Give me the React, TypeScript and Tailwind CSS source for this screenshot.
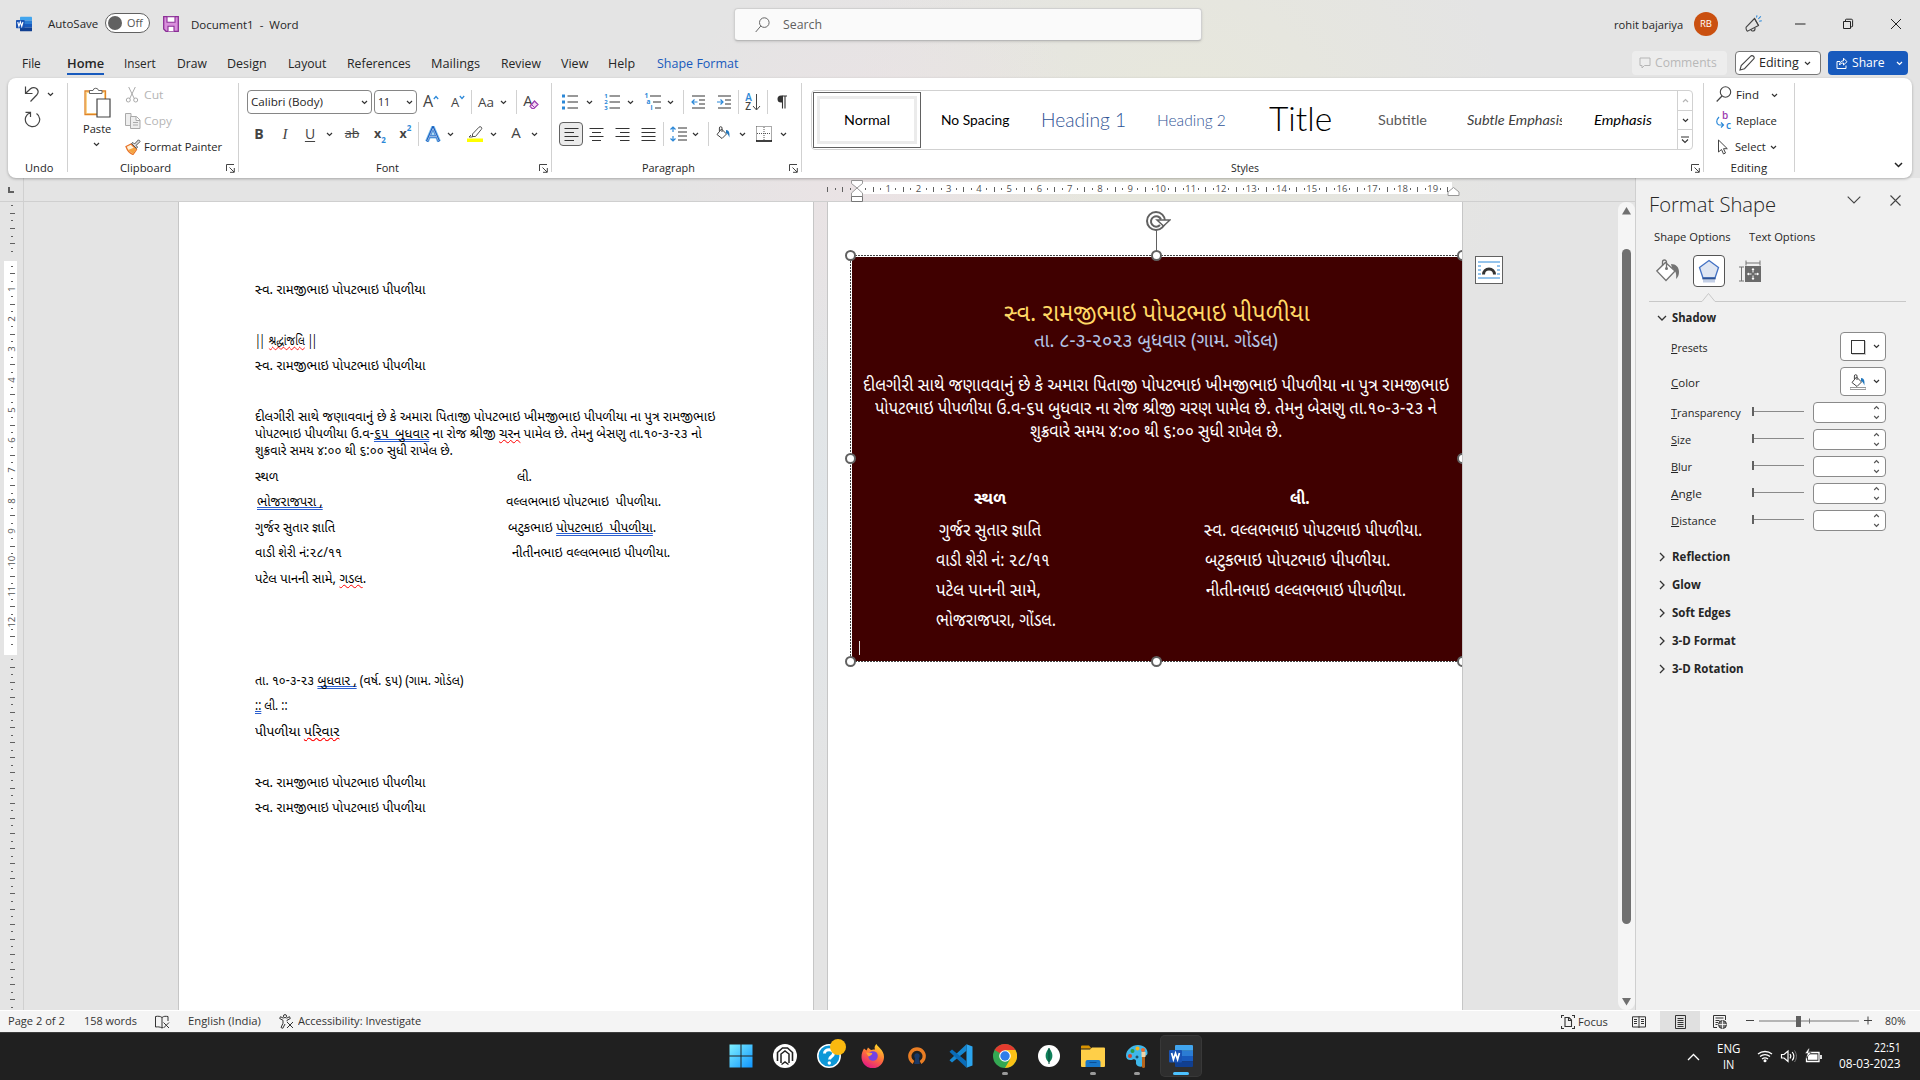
import { ReactNode, useLayoutEffect, useRef, useState } from "react";

/** Scales its text horizontally so that it takes exactly `w` pixels. */
function Fit({ w, className = "", children }: { w: number; className?: string; children: ReactNode }) {
  const ref = useRef<HTMLSpanElement>(null);
  const [scale, setScale] = useState(1);
  useLayoutEffect(() => {
    const natural = ref.current?.offsetWidth ?? w;
    if (natural > 0) setScale(w / natural);
  }, [w]);
  return (
    <span className={`inline-block shrink-0 whitespace-pre ${className}`} style={{ width: w }}>
      <span ref={ref} className="inline-block origin-left whitespace-pre" style={{ transform: `scaleX(${scale})` }}>
        {children}
      </span>
    </span>
  );
}

function Svg({ w, h, vb, className = "", children }: { w: number; h: number; vb?: string; className?: string; children: ReactNode }) {
  return (
    <svg width={w} height={h} viewBox={vb ?? `0 0 ${w} ${h}`} fill="none" className={`block shrink-0 ${className}`}>
      {children}
    </svg>
  );
}

const Chev = ({ c = "#333", className = "" }: { c?: string; className?: string }) => (
  <Svg w={7} h={5} className={className}>
    <path d="M1 1 3.5 3.5 6 1" stroke={c} strokeWidth="1.2" />
  </Svg>
);

const Cell = ({ className, children }: { className: string; children: ReactNode }) => (
  <div className={`flex shrink-0 items-center justify-center ${className}`}>{children}</div>
);

const Sep = ({ className = "" }: { className?: string }) => <div className={`h-6 w-px shrink-0 bg-[#d1d1d1] ${className}`} />;
const GroupSep = () => <div className="mt-[5px] h-[89px] w-px shrink-0 bg-[#d1d1d1]" />;

function WordLogo({ size }: { size: number }) {
  return (
    <Svg w={size} h={size} vb="0 0 24 24">
      <path d="M7 1h16a1 1 0 0 1 1 1v4.7H6V2a1 1 0 0 1 1-1z" fill="#41a5ee" />
      <path d="M6 6.700h18V12H6z" fill="#2b7cd3" />
      <path d="M6 12h18v5.300H6z" fill="#185abd" />
      <path d="M6 17.300h18V22a1 1 0 0 1-1 1H7a1 1 0 0 1-1-1z" fill="#103f91" />
      <rect x="0" y="6" width="13" height="12.400" rx="1" fill="#1a53b3" />
      <path d="M2.600 9 4.400 15.400 6.500 9.200 8.600 15.400 10.400 9" stroke="#fff" strokeWidth="1.700" />
    </Svg>
  );
}

function Launcher() {
  return (
    <Svg w={9} h={9}>
      <path d="M.5 7V.5H8M3.500 3.500l4.500 4.500M8.300 4v4.300H4" stroke="#444" />
    </Svg>
  );
}

function Group({ className, label, lw, launcher, children }: { className: string; label: string; lw: number; launcher?: boolean; children: ReactNode }) {
  return (
    <div className={`flex shrink-0 flex-col ${className}`}>
      <div className="h-[80px]">{children}</div>
      <div className="flex h-[20px] items-center">
        <div className="flex flex-1 justify-center">
          <Fit w={lw}>{label}</Fit>
        </div>
        {launcher && <Cell className="w-4"><Launcher /></Cell>}
      </div>
    </div>
  );
}

function TitleBar() {
  return (
    <div className="flex h-12 shrink-0 text-[11.5px]">
      <div className="mt-4 ml-4"><WordLogo size={16} /></div>
      <Fit w={50} className="mt-[15px] ml-4">AutoSave</Fit>
      <div className="mt-[13px] ml-[7px] flex h-5 w-[45px] items-center rounded-full border border-[#616161] bg-white pl-[2px]">
        <div className="size-[14px] rounded-full bg-[#616161]" />
        <Fit w={16} className="ml-[5px] leading-4 text-[#555]">Off</Fit>
      </div>
      <Svg w={16} h={16} className="mt-4 ml-[13px]">
        <path d="M.7.7h14.6v14.6H3L.7 13z" fill="#d98fdc" stroke="#8b2f96" strokeWidth="1.3" />
        <path d="M4 .7h8v5.6H4z" fill="#fff" stroke="#8b2f96" strokeWidth="1.1" />
        <path d="M5 15.3v-5h6v5" fill="#fff" stroke="#8b2f96" strokeWidth="1.1" />
      </Svg>
      <Fit w={108} className="mt-4 ml-3">{"Document1  -  Word"}</Fit>
      <div className="mt-2 ml-[435px] flex h-[33px] w-[468px] items-center rounded-[4px] border border-[#d0d0d0] border-b-[#b8b8b8] bg-[#fafafa] pl-[20px] shadow-sm">
        <Svg w={15} h={16}>
          <circle cx="9.3" cy="5.6" r="4.8" stroke="#666" />
          <path d="M5.8 9 .7 15" stroke="#666" />
        </Svg>
        <Fit w={39} className="ml-[13px] text-[12px] text-[#5f5f5f]">Search</Fit>
      </div>
      <Fit w={69} className="mt-4 ml-[412px]">rohit bajariya</Fit>
      <div className="mt-3 ml-[11px] flex size-6 items-center justify-center rounded-full bg-[#ca5010] text-[9.5px] text-white">
        <Fit w={12}>RB</Fit>
      </div>
      <Svg w={17} h={18} className="mt-[15px] ml-[27px]">
        <path d="M9.500 3.500 1.200 12.200c-.6.8.3 3.500 1.300 4l11-5.700z" stroke="#444" strokeWidth="1.100" />
        <path d="M9.500 3.500 13.500 10.500M6 14.500c.3 2.500 4.500 2 4-1.500" stroke="#444" strokeWidth="1.100" />
        <path d="M11.500 2.500 12 .3M13.300 4 15.800 1.300M14.200 6.300l2.600-.6" stroke="#2b88d8" strokeWidth="1.100" />
      </Svg>
      <Svg w={110} h={12} className="mt-[18px] ml-[33px]">
        <path d="M0 6h10.500" stroke="#222" />
        <path d="M48.500 3.500h7v7h-7z" stroke="#222" />
        <path d="M50.500 3.500V2a.8.8 0 0 1 .8-.8h5a1.300 1.300 0 0 1 1.300 1.300v5.500a.8.8 0 0 1-.8.8h-1.300" stroke="#222" />
        <path d="M96 1l10 10M106 1 96 11" stroke="#222" />
      </Svg>
    </div>
  );
}

function TabBar() {
  return (
    <div className="flex h-[30px] shrink-0 text-[12.5px] leading-[18px] text-[#262626]">
      <Fit w={19} className="mt-[7px] ml-[22px]">File</Fit>
      <div className="ml-[26px] flex flex-col pt-[7px]">
        <Fit w={37} className="font-semibold">Home</Fit>
        <div className="h-[2px] w-[37px] bg-[#185abd]" />
      </div>
      <Fit w={32} className="mt-[7px] ml-5">Insert</Fit>
      <Fit w={30} className="mt-[7px] ml-[21px]">Draw</Fit>
      <Fit w={40} className="mt-[7px] ml-5">Design</Fit>
      <Fit w={38} className="mt-[7px] ml-[21px]">Layout</Fit>
      <Fit w={64} className="mt-[7px] ml-[21px]">References</Fit>
      <Fit w={49} className="mt-[7px] ml-5">Mailings</Fit>
      <Fit w={40} className="mt-[7px] ml-[21px]">Review</Fit>
      <Fit w={27} className="mt-[7px] ml-5">View</Fit>
      <Fit w={27} className="mt-[7px] ml-5">Help</Fit>
      <Fit w={81} className="mt-[7px] ml-[22px] text-[#185abd]">Shape Format</Fit>
      <div className="mt-[3px] ml-[894px] flex h-6 w-[95px] items-center rounded-[4px] bg-[#ededed] pl-[7px] text-[#b8b8b8]">
        <Svg w={12} h={12}><path d="M1 1h10v7.500H5.500L3 11V8.500H1z" stroke="#b5b5b5" /></Svg>
        <Fit w={62} className="ml-1">Comments</Fit>
      </div>
      <div className="mt-[3px] ml-2 flex h-6 w-[86px] items-center rounded-[4px] border border-[#777] bg-white pl-[3px]">
        <Svg w={16} h={16}>
          <path d="M1 15 2.200 10.500 11.500 1.300a1.800 1.800 0 0 1 3 2.900L5.500 13.700z" stroke="#444" strokeWidth="1.100" />
        </Svg>
        <Fit w={40} className="ml-[4px]">Editing</Fit>
        <Chev className="ml-[5px]" />
      </div>
      <div className="mt-[3px] ml-[7px] flex h-6 w-[80px] items-center rounded-[4px] bg-[#185abd] pl-2 text-white">
        <Svg w={12} h={12}>
          <path d="M4 4.500H1v7h9V8.500M3.500 8C3.500 5 5.500 3.800 7.500 3.800V1.200L11 4.700 7.500 8V6C5.500 6 4.500 6.500 3.500 8z" stroke="#fff" />
        </Svg>
        <Fit w={33} className="ml-[4px]">Share</Fit>
        <Chev c="#fff" className="ml-[11px]" />
      </div>
    </div>
  );
}

const Lines = ({ xs }: { xs: [number, number][] }) => (
  <Svg w={15} h={14}>
    {xs.map(([a, b], i) => (
      <path key={i} d={`M${a} ${1.5 + i * 4}H${b}`} stroke="#333" />
    ))}
  </Svg>
);

function Bucket({ bar }: { bar?: boolean }) {
  return (
    <Svg w={16} h={16}>
      <path d="M6.500 3 11.500 8 7 12.500 2 8.500z" stroke="#444" />
      <path d="M7 6V2a1.300 1.300 0 0 0-2.600 0v3" stroke="#444" />
      <path d="M11 4c3 0 4 3 3.300 7.500C13.500 9 12.500 7.500 11 7z" fill="#2177bd" />
      {bar && <path d="M0 13.500h16v2H0z" stroke="#999" fill="#fff" />}
    </Svg>
  );
}

function UndoGroup() {
  return (
    <Group className="w-[59px] pl-[3px]" label="Undo" lw={28}>
      <div className="flex flex-col pt-[3px] pl-[13px]">
        <div className="flex h-[26px] items-center">
          <Svg w={16} h={18}>
            <path d="M1.500 1.500v7H8.500M1.700 8.200 6.500 3.700c2-1.700 5-1.500 6.500.3s1.500 4-.3 6L6.500 16.500" stroke="#444" strokeWidth="1.200" />
          </Svg>
          <Chev className="ml-[7px]" />
        </div>
        <Svg w={17} h={17} className="mt-[4px]">
          <path d="M1.500 1.300H6.500V6M6.200 1.700A7.200 7.200 0 1 0 12.500 2.500" stroke="#444" strokeWidth="1.200" />
        </Svg>
      </div>
    </Group>
  );
}

function ClipboardGroup() {
  return (
    <Group className="w-[170px]" label="Clipboard" lw={51} launcher>
      <div className="flex">
        <div className="flex w-[57px] flex-col items-center pt-[9px]">
          <Svg w={28} h={31}>
            <path d="M2 4h21v23H2z" fill="#fff" />
            <path d="M3.200 5.200h18.600v21.600H3.200z" stroke="#fbd78f" strokeWidth="1.600" />
            <path d="M8 4H2v23.500h12M17 4h5.500v8" stroke="#e08426" strokeWidth="1.300" />
            <path d="M6.500 6.500v-3h3.500a2.800 2.800 0 0 1 5.500 0H19v3z" fill="#fff" stroke="#666" />
            <path d="M14 12h13v18H14z" fill="#fff" stroke="#444" strokeWidth="1.200" />
          </Svg>
          <Fit w={28} className="mt-[2px] leading-[17px]">Paste</Fit>
          <Chev className="mt-[5px]" />
        </div>
        <div className="flex flex-col pt-[4px] text-[#b5b5b5]">
          <div className="flex h-[26px] items-center">
            <Svg w={14} h={16}>
              <path d="M3.700 0 9.500 12M10.300 0 4.500 12" stroke="#aaa" />
              <circle cx="3.300" cy="13" r="2" stroke="#aaa" />
              <circle cx="10.700" cy="13" r="2" stroke="#aaa" />
            </Svg>
            <Fit w={19} className="ml-[5px]">Cut</Fit>
          </div>
          <div className="flex h-[26px] items-center">
            <Svg w={16} h={16}>
              <path d="M5 12.500H.5v-12H6v3" stroke="#aaa" fill="#eee" />
              <path d="M5.500 3.500h6l3.500 3.500v8.500H5.500zM11 3.500V7.500h4M8 9.500h5M8 12h5" stroke="#aaa" fill="#eee" />
            </Svg>
            <Fit w={28} className="ml-[3px]">Copy</Fit>
          </div>
          <div className="flex h-[26px] items-center text-[#262626]">
            <Svg w={16} h={16}>
              <path d="M1 7.500 6 5l5.500 5.500L8 15.500C5 14.500 2.500 12 1 7.500z" fill="#fff2d8" stroke="#e8732a" strokeWidth="1.300" />
              <path d="M3 11l6.500-2.500 1.500 2L8 15z" fill="#f4a340" />
              <path d="M6.500 4.500 8 3.500 9.500 5 13.500.8l1.700 1.700L11 6.500l1.500 1.500L11.500 9.500z" fill="#ddd" stroke="#555" />
            </Svg>
            <Fit w={78} className="ml-[3px]">Format Painter</Fit>
          </div>
        </div>
      </div>
    </Group>
  );
}

function FontGroup() {
  return (
    <Group className="w-[312px]" label="Font" lw={23} launcher>
      <div className="flex flex-col pt-2 pl-2 text-[#444]">
        <div className="flex h-8 items-center">
          <div className="flex h-6 w-[125px] items-center justify-between rounded-[4px] border border-[#868686] pr-[3px] pl-[3px] text-[#262626]">
            <Fit w={72}>Calibri (Body)</Fit><Chev />
          </div>
          <div className="ml-[2px] flex h-6 w-[43px] items-center justify-between rounded-[4px] border border-[#868686] pr-[3px] pl-[3px] text-[#262626]">
            <Fit w={12}>11</Fit><Chev />
          </div>
          <Cell className="w-7 pb-[2px]">
            <span className="text-[16px] leading-5">A</span>
            <Svg w={6} h={5} className="mb-2"><path d="M.8 4 3 1.500 5.200 4" stroke="#2b88d8" strokeWidth="1.200" /></Svg>
          </Cell>
          <Cell className="w-[26px]">
            <span className="text-[13px] leading-5">A</span>
            <Svg w={6} h={5} className="mb-[10px]"><path d="M.8 1 3 3.500 5.200 1" stroke="#2b88d8" strokeWidth="1.200" /></Svg>
          </Cell>
          <Sep />
          <Cell className="w-7 text-[13.5px]">Aa</Cell>
          <Cell className="w-[7px]"><Chev /></Cell>
          <Sep className="ml-[9px]" />
          <Cell className="w-7">
            <span className="pb-1 text-[15px] leading-5">A</span>
            <Svg w={10} h={10} className="mt-[5px] -ml-[4px]">
              <path d="M5.500 1 9 4.500 5 8.500H3L1 6.300z" fill="#f3dcf5" stroke="#9c3bb0" strokeWidth="1.200" />
              <path d="M2.500 4.500 6 8" stroke="#9c3bb0" />
            </Svg>
          </Cell>
        </div>
        <div className="flex h-8 items-center text-[14px]">
          <Cell className="w-[24px] font-bold">B</Cell>
          <Cell className="ml-[2px] w-6 font-['Liberation_Serif'] text-[15px] italic">I</Cell>
          <Cell className="w-[26px] underline underline-offset-2">U</Cell>
          <Cell className="ml-[2px] w-2"><Chev /></Cell>
          <Cell className="w-[38px] text-[12.5px] line-through">ab</Cell>
          <Cell className="w-[18px]"><span className="text-[12.500px] font-bold">x</span><span className="mt-3 text-[8px] font-bold text-[#2b88d8]">2</span></Cell>
          <Cell className="ml-1 w-[25px]"><span className="text-[12.500px] font-bold">x</span><span className="mb-3 text-[8px] font-bold text-[#2b88d8]">2</span></Cell>
          <Sep />
          <Cell className="w-7">
            <Svg w={16} h={17}>
              <path d="M2 15.500 8 1.500l6 14M4.500 10.500h7" stroke="#7cc0ee" strokeWidth="4" />
              <path d="M2 15.500 8 1.500l6 14M4.500 10.500h7" stroke="#185abd" strokeWidth="2.200" />
              <path d="M2.500 15 8 2.500l5.500 12.500M5 10.500h6" stroke="#e8f4fc" strokeWidth=".6" />
            </Svg>
          </Cell>
          <Cell className="w-[7px]"><Chev /></Cell>
          <Cell className="ml-[7px] w-7">
            <Svg w={16} h={17}>
              <path d="M5.500 8 12 1.200a1.500 1.500 0 0 1 2.300 2.200L8.500 10.500H5.500zM5.500 8v3H2l2-2" stroke="#555" />
              <path d="M0 12.500h16V16H0z" fill="#ff0" />
            </Svg>
          </Cell>
          <Cell className="w-2"><Chev /></Cell>
          <Cell className="ml-[5px] w-7 pb-1 text-[15px]">A</Cell>
          <Cell className="w-2"><Chev /></Cell>
        </div>
      </div>
    </Group>
  );
}

function ParagraphGroup() {
  const full: [number, number] = [0.5, 14.5];
  return (
    <Group className="w-[249px]" label="Paragraph" lw={53} launcher>
      <div className="flex flex-col pt-2 pl-[5px]">
        <div className="flex h-8 items-center">
          <Cell className="w-[25px]">
            <Svg w={16} h={16}>
              <path d="M0 .5h3v3H0zM0 6.500h3v3H0zM0 12.500h3v3H0z" fill="#2b88d8" />
              <path d="M5.500 2H16M5.500 8H16M5.500 14H16" stroke="#333" strokeWidth="1.100" />
            </Svg>
          </Cell>
          <Cell className="ml-[2px] w-[10px]"><Chev /></Cell>
          <Cell className="ml-1 w-7">
            <div className="flex flex-col text-[6px] leading-[6px] font-bold text-[#2b88d8]"><span>1</span><span>2</span><span>3</span></div>
            <Svg w={12} h={16}><path d="M1.500 2H12M1.500 8H12M1.500 14H12" stroke="#333" strokeWidth="1.100" /></Svg>
          </Cell>
          <Cell className="w-2"><Chev /></Cell>
          <Cell className="ml-[5px] w-7">
            <div className="flex flex-col text-[6.500px] leading-[6px] font-bold text-[#2b88d8]"><span>1</span><span className="pl-[2px]">a</span><span className="pl-[6px]">i</span></div>
            <Svg w={11} h={16} className="-ml-[2px]"><path d="M0 2h11M3 8h8M5 14h6" stroke="#333" strokeWidth="1.100" /></Svg>
          </Cell>
          <Cell className="w-[6px]"><Chev /></Cell>
          <Sep className="ml-[10px]" />
          <Cell className="w-7">
            <Svg w={15} h={14}><path d="M1 1h13M8 5h6M8 9h6M1 13h13" stroke="#333" /><path d="M6.500 7H1M3.500 4.500 1 7l2.500 2.500" stroke="#2b88d8" strokeWidth="1.200" /></Svg>
          </Cell>
          <Cell className="w-6">
            <Svg w={15} h={14}><path d="M1 1h13M8 5h6M8 9h6M1 13h13" stroke="#333" /><path d="M0 7h6M3.500 4.500 6 7 3.500 9.500" stroke="#2b88d8" strokeWidth="1.200" /></Svg>
          </Cell>
          <Sep className="ml-[2px]" />
          <Cell className="w-7">
            <div className="flex flex-col text-[10px] leading-[9px] font-semibold"><span className="text-[#2b88d8]">A</span><span className="text-[#444]">Z</span></div>
            <Svg w={9} h={17}><path d="M4.500 0v15.500M1 12l3.500 4L8 12" stroke="#444" /></Svg>
          </Cell>
          <Sep />
          <Cell className="w-7">
            <Svg w={10} h={14}><path d="M5 1h5M5.500 1v12.500M8 1v12.500" stroke="#333" strokeWidth="1.100" /><path d="M5.500.5H4a3.500 3.500 0 0 0 0 7h1.500z" fill="#333" /></Svg>
          </Cell>
        </div>
        <div className="flex h-8 items-center">
          <Cell className="ml-[2px] h-6 w-6 rounded-[4px] border border-[#616161] bg-[#ebebeb]"><Lines xs={[full, [0.5, 10], full, [0.5, 10]]} /></Cell>
          <Cell className="w-[26px]"><Lines xs={[full, [3, 12], full, [3, 12]]} /></Cell>
          <Cell className="w-[26px]"><Lines xs={[full, [5, 14.5], full, [5, 14.5]]} /></Cell>
          <Cell className="w-[26px]"><Lines xs={[full, full, full, full]} /></Cell>
          <Sep className="ml-[2px]" />
          <Cell className="w-7">
            <Svg w={17} h={16}><path d="M3 6V1M.5 3.500 3 1l2.500 2.500M3 10v5M.5 12.500 3 15l2.500-2.500" stroke="#2b88d8" strokeWidth="1.200" /><path d="M8 2h9M8 6h9M8 10h9M8 14h9" stroke="#333" /></Svg>
          </Cell>
          <Cell className="w-[7px]"><Chev /></Cell>
          <Sep className="ml-[9px]" />
          <Cell className="w-[28px]"><Bucket /></Cell>
          <Cell className="ml-[2px] w-[7px]"><Chev /></Cell>
          <Cell className="ml-1 w-7">
            <Svg w={16} h={16}>
              <path d="M.5.5h15v14M.5.5V15M8 1v13M1 7.500h14" stroke="#555" strokeDasharray="1 1" />
              <path d="M0 15h16" stroke="#000" strokeWidth="1.500" />
            </Svg>
          </Cell>
          <Cell className="w-[10px]"><Chev /></Cell>
        </div>
      </div>
    </Group>
  );
}

function StylesGroup() {
  return (
    <Group className="w-[901px]" label="Styles" lw={28} launcher>
      <div className="mt-3 ml-[9px] flex h-[60px] w-[882px] rounded-[4px] border border-[#d1d1d1] font-['Lato'] text-black">
        <div className="mt-px ml-px flex h-[56px] w-[108px] items-center justify-center border border-[#616161] p-[3px]">
          <div className="flex size-full items-center justify-center border-[3px] border-[#ebebeb] text-[13px]">
            <Fit w={46}>Normal</Fit>
          </div>
        </div>
        <Cell className="w-[108px] text-[13px]"><Fit w={68}>No Spacing</Fit></Cell>
        <Cell className="w-[108px] text-[19px] font-light text-[#2f5496]"><Fit w={85}>Heading 1</Fit></Cell>
        <Cell className="w-[108px] text-[16px] font-light text-[#2f5496]"><Fit w={69}>Heading 2</Fit></Cell>
        <Cell className="w-[110px] pb-1 text-[33px] font-light"><Fit w={63}>Title</Fit></Cell>
        <Cell className="w-[94px] text-[13px] text-[#5a5a5a]"><Fit w={49}>Subtitle</Fit></Cell>
        <div className="flex w-[121px] items-center pl-[18px] text-[13px] text-[#404040] italic">
          <div className="w-[95px] overflow-hidden"><Fit w={98}>Subtle Emphasis</Fit></div>
        </div>
        <Cell className="w-[106px] text-[13px] italic"><Fit w={58}>Emphasis</Fit></Cell>
        <div className="ml-auto flex w-[15px] flex-col border-l border-[#d1d1d1]">
          <Cell className="h-[19px]"><Svg w={7} h={5}><path d="M1 4 3.500 1.500 6 4" stroke="#b5b5b5" strokeWidth="1.200" /></Svg></Cell>
          <Cell className="h-[20px] border-y border-[#d1d1d1]"><Chev /></Cell>
          <Cell className="h-[19px]"><Svg w={8} h={8}><path d="M0 1h8M1 3.500 4 6.500 7 3.500" stroke="#333" strokeWidth="1.100" /></Svg></Cell>
        </div>
      </div>
    </Group>
  );
}

function EditingGroup() {
  return (
    <Group className="w-[90px]" label="Editing" lw={37}>
      <div className="flex flex-col pt-[4px] pl-[12px]">
        <div className="flex h-[26px] items-center">
          <Svg w={16} h={16} className="mb-[2px]"><circle cx="9.500" cy="6" r="5.200" stroke="#444" strokeWidth="1.100" /><path d="M6 10 .7 15.500" stroke="#444" strokeWidth="1.200" /></Svg>
          <Fit w={23} className="ml-1">Find</Fit>
          <Chev className="ml-[12px]" />
        </div>
        <div className="flex h-[26px] items-center">
          <div className="relative h-4 w-4 text-[10px] leading-[10px] font-semibold">
            <span className="absolute top-[-3px] left-[6px] text-[#9c3bb0]">b</span>
            <span className="absolute top-[7px] left-[10px] text-[#2b88d8]">c</span>
            <Svg w={10} h={12} className="mt-[3px]"><path d="M3 1C0 4 0 8 3 9h4M5 6.500 7.500 9 5 11.500" stroke="#2b88d8" strokeWidth="1.200" /></Svg>
          </div>
          <Fit w={41} className="ml-1">Replace</Fit>
        </div>
        <div className="flex h-[26px] items-center">
          <Svg w={16} h={16}><path d="M2.500 1v12l3-2.500 2 4.500 2-1-2-4.300h3.800z" stroke="#444" /></Svg>
          <Fit w={31} className="ml-[3px]">Select</Fit>
          <Chev className="ml-[4px]" />
        </div>
      </div>
    </Group>
  );
}

function Ribbon() {
  return (
    <div className="relative z-10 mx-2 flex h-[100px] shrink-0 rounded-[8px] bg-white text-[11.5px] leading-4 text-[#262626] shadow-[0_1px_3px_rgba(0,0,0,0.28)]">
      <UndoGroup />
      <GroupSep />
      <ClipboardGroup />
      <GroupSep />
      <FontGroup />
      <GroupSep />
      <ParagraphGroup />
      <GroupSep />
      <StylesGroup />
      <GroupSep />
      <EditingGroup />
      <GroupSep />
      <div className="flex flex-1 items-end justify-end pr-[9px] pb-[10px]">
        <Svg w={9} h={6}><path d="M1 1 4.500 4.500 8 1" stroke="#222" strokeWidth="1.500" /></Svg>
      </div>
    </div>
  );
}

const hTicks = Array.from({ length: 83 }, (_, i) => i - 4);
const vTicks = Array.from({ length: 107 }, (_, i) => i - 7);

function HRuler() {
  return (
    <div className="relative flex h-6 shrink-0 border-b border-[#cfcfcf]">
      <div className="h-full w-6 border-r border-[#d0d0d0] pt-[9px] pl-2">
        <div className="h-[6px] w-[6px] border-b-2 border-l-2 border-[#616161]" />
      </div>
      <div className="mt-1 ml-[800px] flex h-3 items-center bg-[linear-gradient(to_right,transparent_34px,#fff_34px)] pt-[2px] text-[9.5px] text-[#555]">
        {hTicks.map((k) => (
          <div key={k} className="flex w-[7.575px] shrink-0 items-center justify-center">
            {k > 0 && k % 4 === 0 ? <span>{k / 4}</span> : k === 0 ? null : k % 2 === 0 ? <div className="h-[5px] w-px bg-[#616161]" /> : <div className="h-[2px] w-px bg-[#616161]" />}
          </div>
        ))}
      </div>
      <Svg w={14} h={22} className="absolute top-[2px] left-[850px]">
        <path d="M1.500.5h11v3L7 8 1.500 3.500zM1.500 16.500V13L7 8l5.500 5v3.500z" fill="#fff" stroke="#999" />
        <path d="M1.500 16.500h11v5h-11z" fill="#fff" stroke="#777" />
      </Svg>
      <Svg w={13} h={9} className="absolute top-[9px] left-[1447px]">
        <path d="M1 8.500V5l5.500-4.500L12 5v3.500z" fill="#fff" stroke="#999" />
      </Svg>
    </div>
  );
}

function VRuler() {
  return (
    <div className="h-full w-6 shrink-0 overflow-hidden border-r border-[#d0d0d0]">
      <div className="ml-1 flex w-[13px] flex-col bg-[linear-gradient(to_bottom,transparent_59px,#fff_59px,#fff_453px,transparent_453px)]">
        {vTicks.map((k) => (
          <div key={k} className="flex h-[7.575px] shrink-0 items-center justify-center pl-[3px] text-[9.500px] text-[#555]">
            {k > 0 && k % 4 === 0 && k < 52 ? (
              <span className="-rotate-90">{k / 4}</span>
            ) : k === 0 || k === 52 ? null : k % 2 === 0 ? (
              <div className="h-px w-[5px] bg-[#616161]" />
            ) : (
              <div className="h-px w-[2px] bg-[#616161]" />
            )}
          </div>
        ))}
      </div>
    </div>
  );
}

const Red = ({ children }: { children: ReactNode }) => <span className="underline decoration-[#f00] decoration-wavy decoration-[1px] underline-offset-[1px] [text-decoration-skip-ink:none]">{children}</span>;
const Blue = ({ children }: { children: ReactNode }) => <span className="underline decoration-[#2b5fd0] decoration-double decoration-[1px] underline-offset-[1px] [text-decoration-skip-ink:none]">{children}</span>;
const P = ({ children }: { children?: ReactNode }) => <div className="flex h-[25.5px] shrink-0">{children}</div>;
const L = ({ children }: { children?: ReactNode }) => <div className="flex h-[17px] shrink-0">{children}</div>;

const NAME = "સ્વ. રામજીભાઇ પોપટભાઇ પીપળીયા";

function PageOne() {
  return (
    <div className="ml-[154px] flex w-[636px] shrink-0 flex-col border-x border-[#c6c6c6] bg-white pt-[80.500px] pl-[76px] font-['Noto_Sans_Gujarati','Noto_Sans',sans-serif] text-[13.500px] leading-[17px] text-black">
      <P><Fit w={170}>{NAME}</Fit></P>
      <P />
      <P><Fit w={61}><span className="tracking-[-2px]">||</span>{"  "}<Red>શ્રદ્ધાંજલિ</Red>{" "}<span className="tracking-[-2px]">||</span></Fit></P>
      <P><Fit w={170}>{NAME}</Fit></P>
      <P />
      <L><Fit w={461}>દીલગીરી સાથે જણાવવાનું છે કે અમારા પિતાજી પોપટભાઇ ખીમજીભાઇ પીપળીયા ના પુત્ર રામજીભાઇ</Fit></L>
      <L><Fit w={447}>પોપટભાઇ પીપળીયા ઉ.વ-<Blue>{"૬૫  બુધવાર"}</Blue> ના રોજ શ્રીજી <Red>ચરન</Red> પામેલ છે. તેમનુ બેસણુ તા.૧૦-૩-૨૩ નો</Fit></L>
      <P><Fit w={198}>શુક્રવારે સમય ૪:૦૦ થી ૬:૦૦ સુધી રાખેલ છે.</Fit></P>
      <P><Fit w={23}>સ્થળ</Fit><Fit w={15} className="ml-[239px]">લી.</Fit></P>
      <P><Fit w={66} className="ml-[2px]"><Blue>ભોજરાજપરા ,</Blue></Fit><Fit w={155} className="ml-[183px]">{"વલ્લભભાઇ પોપટભાઇ  પીપળીયા."}</Fit></P>
      <P><Fit w={80}>ગુર્જર સુતાર જ્ઞાતિ</Fit><Fit w={148} className="ml-[173px]">બટુકભાઇ <Blue>{"પોપટભાઇ  પીપળીયા"}</Blue>.</Fit></P>
      <P><Fit w={87}>વાડી શેરી નં:૨૮/૧૧</Fit><Fit w={158} className="ml-[170px]">નીતીનભાઇ વલ્લભભાઇ પીપળીયા.</Fit></P>
      <P><Fit w={111}>પટેલ પાનની સામે, <Red>ગડલ</Red>.</Fit></P>
      <P />
      <P />
      <P />
      <P><Fit w={208}>તા. ૧૦-૩-૨૩ <Blue>બુધવાર ,</Blue> (વર્ષ. ૬૫) (ગામ. ગોડંલ)</Fit></P>
      <P><Fit w={33}><Blue>::</Blue> લી. ::</Fit></P>
      <P><Fit w={84}>પીપળીયા <Red>પરિવાર</Red></Fit></P>
      <P />
      <P><Fit w={170}>{NAME}</Fit></P>
      <P><Fit w={170}>{NAME}</Fit></P>
    </div>
  );
}

const Handle = ({ className }: { className: string }) => (
  <div className={`absolute size-[11px] rounded-full border-2 border-[#616161] bg-white ${className}`} />
);

function PageTwo() {
  return (
    <div className="relative ml-[13px] w-[636px] shrink-0 overflow-hidden border-x border-[#c6c6c6] bg-white pt-[55px] pl-[24px] font-['Noto_Sans_Gujarati','Noto_Sans',sans-serif]">
      <div className="flex h-[404px] w-[612px] flex-col bg-[#400000] text-[18px] leading-[23px] text-white">
        <Fit w={306} className="mt-[43px] ml-[152px] text-[24px] leading-[30px] text-[#ffd966]">{NAME}</Fit>
        <Fit w={244} className="ml-[182px] text-[19px] leading-[26px] text-[#b4c6e7]">તા. ૮-૩-૨૦૨૩ બુધવાર (ગામ. ગોંડલ)</Fit>
        <Fit w={586} className="mt-[19px] ml-[11px]">દીલગીરી સાથે જણાવવાનું છે કે અમારા પિતાજી પોપટભાઇ ખીમજીભાઇ પીપળીયા ના પુત્ર રામજીભાઇ</Fit>
        <Fit w={562} className="ml-[23px]">પોપટભાઇ પીપળીયા ઉ.વ-૬૫ બુધવાર ના રોજ શ્રીજી ચરણ પામેલ છે. તેમનુ બેસણુ તા.૧૦-૩-૨૩ ને</Fit>
        <Fit w={252} className="ml-[178px]">શુક્રવારે સમય ૪:૦૦ થી ૬:૦૦ સુધી રાખેલ છે.</Fit>
        <div className="mt-[45px] flex h-[31px] text-[17px] font-bold"><Fit w={32} className="ml-[122px]">સ્થળ</Fit><Fit w={20} className="ml-[284px]">લી.</Fit></div>
        <div className="flex h-[30px]"><Fit w={102} className="ml-[87px]">ગુર્જર સુતાર જ્ઞાતિ</Fit><Fit w={218} className="ml-[163px]">સ્વ. વલ્લભભાઇ પોપટભાઇ પીપળીયા.</Fit></div>
        <div className="flex h-[30px]"><Fit w={114} className="ml-[84px]">વાડી શેરી નં: ૨૮/૧૧</Fit><Fit w={186} className="ml-[155px]">બટુકભાઇ પોપટભાઇ પીપળીયા.</Fit></div>
        <div className="flex h-[30px]"><Fit w={105} className="ml-[84px]">પટેલ પાનની સામે,</Fit><Fit w={200} className="ml-[165px]">નીતીનભાઇ વલ્લભભાઇ પીપળીયા.</Fit></div>
        <Fit w={120} className="ml-[84px]">ભોજરાજપરા, ગોંડલ.</Fit>
        <div className="mt-[8px] ml-[7px] h-[14px] w-px shrink-0 bg-[#ddd]" />
      </div>
      <Svg w={620} h={408} className="absolute top-[53px] left-[22px]">
        <path d="M640 .5H.5v406H640" stroke="#fff" />
        <path d="M640 .5H.5v406H640" stroke="#444" strokeDasharray="2 1" />
      </Svg>
      <div className="absolute top-[28px] left-[328px] h-[22px] w-px bg-[#616161]" />
      <Svg w={26} h={22} className="absolute top-[8px] left-[317px]">
        <circle cx="11" cy="11" r="9" stroke="#616161" strokeWidth="2" />
        <path d="M15 15a5.200 5.200 0 1 1 1-5.500" stroke="#616161" strokeWidth="2" />
        <path d="M12 10h13l-6.500 6z" fill="#fff" stroke="#616161" strokeWidth="1.500" />
      </Svg>
      <Handle className="top-[48px] left-[17px]" />
      <Handle className="top-[48px] left-[323px]" />
      <Handle className="top-[48px] left-[629px]" />
      <Handle className="top-[251px] left-[17px]" />
      <Handle className="top-[251px] left-[629px]" />
      <Handle className="top-[454px] left-[17px]" />
      <Handle className="top-[454px] left-[323px]" />
      <Handle className="top-[454px] left-[629px]" />
    </div>
  );
}

function Slider({ label, lw }: { label: string; lw: number }) {
  return (
    <div className="flex h-[27px] items-center">
      <div className="w-[81px] pt-px"><Fit w={lw}><u>{label[0]}</u>{label.slice(1)}</Fit></div>
      <div className="mb-[3px] h-[9px] w-[2px] bg-[#616161]" />
      <div className="mb-[3px] h-px w-[50px] bg-[#8a8a8a]" />
      <div className="ml-[9px] flex h-[21px] w-[73px] items-center justify-end rounded-[4px] border border-[#8a8a8a] bg-white pr-[5px]">
        <Svg w={7} h={15}><path d="M1.200 4 3.500 1.700 5.800 4M1.200 11 3.500 13.300 5.800 11" stroke="#555" strokeWidth="1.200" /></Svg>
      </div>
    </div>
  );
}

const Section = ({ label, w }: { label: string; w: number }) => (
  <div className="flex h-7 items-center">
    <Svg w={6} h={10}><path d="M1 1l4 4-4 4" stroke="#333" strokeWidth="1.300" /></Svg>
    <Fit w={w} className="ml-[7px] font-bold">{label}</Fit>
  </div>
);

function FormatPane() {
  return (
    <div className="flex h-full w-[285px] shrink-0 flex-col border-l border-[#cfcfcf] bg-[#f0f0f0] pt-[8px] text-[11.5px] leading-4 text-[#262626]">
      <div className="flex h-9 items-center pl-[13px]">
        <Fit w={127} className="font-['Open_Sans'] text-[21px] leading-8 font-light">Format Shape</Fit>
        <Svg w={14} h={8} className="mb-[8px] ml-[71px]"><path d="M.7.7 7 7 13.300.7" stroke="#444" strokeWidth="1.100" /></Svg>
        <Svg w={11} h={11} className="mb-[8px] ml-[29px]"><path d="M.5.5l10 10M10.500.5l-10 10" stroke="#444" strokeWidth="1.100" /></Svg>
      </div>
      <div className="mt-[7px] flex pl-[18px]">
        <Fit w={77}>Shape Options</Fit>
        <Fit w={66} className="ml-[18px]">Text Options</Fit>
      </div>
      <div className="mt-[10px] flex items-center pl-[20px]">
        <Svg w={24} h={24}>
          <path d="M9.500 3.500 19 12l-9 9.500L.8 12z" fill="#fff" stroke="#737373" strokeWidth="1.300" />
          <path d="M10.500 9V3a2 2 0 0 0-4 0v4" stroke="#737373" strokeWidth="1.300" />
          <circle cx="10.500" cy="9.500" r="1.500" fill="#737373" />
          <path d="M15 5c5 0 8 3 8 8 0 3-1 5-3 7 1-6-1-9-4-11z" fill="#737373" />
        </Svg>
        <div className="ml-[13px] flex size-8 items-center justify-center rounded-[4px] border border-[#555] bg-white">
          <Svg w={22} h={24}>
            <path d="M11 1.500 20.500 8.500 17 19H5L1.500 8.500z" fill="#dfe6f2" stroke="#4472c4" strokeWidth="1.300" />
            <path d="M4.500 19.500h13" stroke="#2f5496" strokeWidth="2" />
            <path d="M5 21h12v2.500H5z" fill="#c3cfe6" />
          </Svg>
        </div>
        <Svg w={22} h={22} className="ml-[14px]">
          <path d="M7 3h14M7 .5v5M21 .5v5M2.500 7v14M0 7h5M0 21h5" stroke="#737373" />
          <path d="M6 6h16v16H6z" fill="#6a6a6a" />
          <path d="M14 8.500v11M8.500 14h11" stroke="#fff" strokeDasharray="4 3" />
          <path d="M12.500 10 14 8l1.500 2zM12.500 18l1.500 2 1.500-2zM10 12.500 8 14l2 1.500zM18 12.500l2 1.500-2 1.500z" fill="#fff" />
        </Svg>
      </div>
      <Svg w={257} h={11} className="mt-[5px] ml-[13px]"><path d="M0 9.500h53l6.500-8 6.500 8h191" stroke="#c8c8c8" /></Svg>
      <div className="mt-[3px] flex h-6 items-center pl-[21px]">
        <Svg w={10} h={6}><path d="M1 1l4 4 4-4" stroke="#333" strokeWidth="1.300" /></Svg>
        <Fit w={44} className="ml-[5px] font-bold">Shadow</Fit>
      </div>
      <div className="-mt-px flex flex-col pl-[35px]">
        <div className="flex h-[35px] items-center">
          <div className="w-[169px] pt-[3px]"><Fit w={37}><u>P</u>resets</Fit></div>
          <div className="flex h-[29px] w-[46px] items-center rounded-[4px] border border-[#8a8a8a] bg-white pl-[10px]">
            <div className="size-[14px] border border-[#333] shadow-[1px_1px_0_#ccc]" />
            <Chev className="ml-[8px]" />
          </div>
        </div>
        <div className="flex h-[35px] items-center">
          <div className="w-[169px] pt-[3px]"><Fit w={29}><u>C</u>olor</Fit></div>
          <div className="flex h-[29px] w-[46px] items-center rounded-[4px] border border-[#8a8a8a] bg-white pl-[9px]">
            <Bucket bar />
            <Chev className="ml-[7px]" />
          </div>
        </div>
        <Slider label="Transparency" lw={70} />
        <Slider label="Size" lw={20} />
        <Slider label="Blur" lw={21} />
        <Slider label="Angle" lw={31} />
        <Slider label="Distance" lw={45} />
      </div>
      <div className="mt-[9px] flex flex-col pl-[23px]">
        <Section label="Reflection" w={58} />
        <Section label="Glow" w={29} />
        <Section label="Soft Edges" w={59} />
        <Section label="3-D Format" w={64} />
        <Section label="3-D Rotation" w={72} />
      </div>
    </div>
  );
}

function StatusBar() {
  return (
    <div className="flex h-[22px] shrink-0 items-center border-t border-white bg-[#f4f4f4] text-[10.500px] leading-4 text-[#333]">
      <Fit w={57} className="mb-px ml-2">Page 2 of 2</Fit>
      <Fit w={53} className="mb-px ml-[19px]">158 words</Fit>
      <Svg w={15} h={14} className="ml-[18px]">
        <path d="M7 2.500C5.500 1.200 3 1 .5 1.500v10.500c2.500-.3 4.500-.2 6.500 1V2.500c2-1.500 3.500-1.300 6-1v4.500M7 13l1-.5M8.500 7.500l5.500 5.500M14 7.500 8.500 13" stroke="#333" />
      </Svg>
      <Fit w={73} className="mb-px ml-[18px]">English (India)</Fit>
      <Svg w={15} h={15} className="ml-[18px]">
        <circle cx="6" cy="2.200" r="1.600" stroke="#333" />
        <path d="M4.500 4.300 1.500 2.700.7 4.500 4 6.300v3l-2 4.200 1.800.8L6 10M7.500 4.300 10.500 2.700l.8 1.800L8 6.300v1M8 8l6 6M14 8 8 14" stroke="#333" />
      </Svg>
      <Fit w={123} className="mb-px ml-[4px]">Accessibility: Investigate</Fit>
      <Svg w={14} h={14} className="ml-auto">
        <path d="M3 .5H.5V3M11 .5h2.500V3M3 13.500H.5V11M11 13.500h2.500V11M4 2.500h4l2.500 2.500v6.500H4zM7.500 2.500v3h3" stroke="#333" strokeWidth="1.100" />
      </Svg>
      <Fit w={30} className="ml-[3px] text-[11.500px]">Focus</Fit>
      <Svg w={14} h={14} className="ml-[24px]">
        <path d="M7 1.500v11.500M7 1.800H.5v10.200H7M7 1.800h6.500v10.200H7M2 4.500h3M2 6.500h3M2 8.500h3M9 4.500h3M9 6.500h3M9 8.500h3" stroke="#333" />
      </Svg>
      <div className="ml-[14px] flex h-full w-10 items-center justify-center bg-[#e0e0e0]">
        <Svg w={11} h={14}><path d="M.5.5h10v13H.5zM2.500 3.500h6M2.500 5.500h6M2.500 7.500h6M2.500 9.500h6M2.500 11.500h6" stroke="#333" /></Svg>
      </div>
      <Svg w={15} h={14} className="ml-[13px]">
        <path d="M4 12.500H.5V.5h12V5M2.500 3h8M2.500 5.500h4M2.500 7.500h2.500M2.500 9.500h2" stroke="#333" />
        <circle cx="9.500" cy="9.500" r="4" stroke="#333" fill="#777" /><path d="M5.500 9.500h8M9.500 5.500v8" stroke="#fff" strokeWidth=".8" />
      </Svg>
      <Svg w={127} h={12} className="mb-px ml-[18px]">
        <path d="M0 5.500h8M118 5.500h8M122 1.500v8" stroke="#444" />
        <path d="M13 6h100M63.500 3.500v5" stroke="#777" />
        <path d="M50 1h5v11h-5z" fill="#616161" />
      </Svg>
      <Fit w={21} className="mr-[14px] mb-px ml-[12px]">80%</Fit>
    </div>
  );
}

function TaskItem({ bar, active, children }: { bar?: boolean; active?: boolean; children: ReactNode }) {
  return (
    <div className={`flex h-10 w-10 flex-col items-center rounded-[4px] ${active ? "bg-[#2e2e2e] ring-1 ring-[#383838]" : ""}`}>
      <div className="mt-2 flex h-6 items-center">{children}</div>
      {bar && <div className="mt-[4px] h-[3px] w-[6px] rounded-full bg-[#9a9a9a]" />}
      {active && <div className="mt-[4px] h-[3px] w-4 rounded-full bg-[#4cc2ff]" />}
    </div>
  );
}

function TaskBar() {
  return (
    <div className="flex h-12 shrink-0 border-t border-[#3c3c3c] bg-[#202020] text-white">
      <div className="mt-[3px] ml-[721px] flex gap-1">
        <TaskItem>
          <Svg w={24} h={24}>
            <defs><linearGradient id="win" x1="0" y1="0" x2="1" y2="1"><stop stopColor="#7ff0ff" /><stop offset="1" stopColor="#0f95ff" /></linearGradient></defs>
            <path d="M.5.5h11v11H.5zM12.500.5h11v11h-11zM.5 12.500h11v11H.5zM12.500 12.500h11v11h-11z" fill="url(#win)" />
          </Svg>
        </TaskItem>
        <TaskItem>
          <Svg w={24} h={24}>
            <circle cx="12" cy="12" r="12" fill="#fff" />
            <path d="M4.500 17V8.500L9.500 4h5l5 4.500V17" stroke="#222" strokeWidth="1.600" />
            <path d="M8 19V10l4-3 4 3v9M8.500 20.500 12 18l3.500 2.500" stroke="#222" strokeWidth="1.500" />
          </Svg>
        </TaskItem>
        <TaskItem>
          <div className="relative">
            <Svg w={24} h={24}><circle cx="12" cy="12" r="11.200" fill="#0d98d8" stroke="#fff" strokeWidth="1.500" />
              <path d="M7.500 9.500c0-5 9-5 9 0 0 3-4 3-4 6" stroke="#fff" strokeWidth="3" /><circle cx="12.300" cy="19" r="1.700" fill="#fff" />
            </Svg>
            <div className="absolute -top-[5px] left-[13px] size-4 rounded-full bg-[#fbb90f]" />
          </div>
        </TaskItem>
        <TaskItem>
          <Svg w={24} h={24}>
            <defs><linearGradient id="ff" x1=".8" y1="0" x2=".3" y2="1"><stop stopColor="#ffe226" /><stop offset=".5" stopColor="#ff7139" /><stop offset="1" stopColor="#e31587" /></linearGradient></defs>
            <path d="M3 4.500l2.500 2 1.500-3 3 2.500c2-.5 3-.5 4-.5-1-2 0-4 1.500-5.500 1 3 7.500 6 7.500 13a11.200 11.200 0 0 1-22.500 0C.5 9.500 1.500 7 3 4.500z" fill="url(#ff)" />
            <circle cx="12" cy="12" r="4.800" fill="#7542e5" />
            <path d="M5 8.500l6 .5c1 1-2 3-3.500 3.500z" fill="#ffa436" />
          </Svg>
        </TaskItem>
        <TaskItem>
          <Svg w={20} h={20}>
            <path d="M6.500 16.500a7.200 7.200 0 1 1 7 0" stroke="#ea7e24" strokeWidth="3.300" />
            <circle cx="10" cy="10" r="2.700" fill="#1a3967" /><path d="M8.300 11h3.400l1 7H7.300z" fill="#1a3967" />
          </Svg>
        </TaskItem>
        <TaskItem>
          <Svg w={24} h={24}>
            <path d="M17.500.3 23.500 2.500v19l-6 2.200z" fill="#2ba5ef" />
            <path d="M17.500.3v6.500L3 18.500l-2.500-2.300z" fill="#1688d2" />
            <path d="M17.500 23.700v-6.500L3 5.500.5 7.800z" fill="#0a6cb8" />
          </Svg>
        </TaskItem>
        <TaskItem bar>
          <Svg w={24} h={24}>
            <circle cx="12" cy="12" r="12" fill="#34a853" />
            <path d="M12 12 1.600 6A12 12 0 0 1 22.400 6z" fill="#e33b2e" />
            <path d="M12 6h10.400A12 12 0 0 1 12 24l5.200-9z" fill="#fbc116" />
            <circle cx="12" cy="12" r="5.800" fill="#fff" /><circle cx="12" cy="12" r="4.700" fill="#2f7de9" />
          </Svg>
        </TaskItem>
        <TaskItem>
          <Svg w={22} h={22}><circle cx="11" cy="11" r="11" fill="#fff" /><path d="M11 3c4.500 5 4.500 11 0 14.500C6.500 14 6.500 8 11 3z" fill="#10805a" /><path d="M11 3v16" stroke="#064b3a" /></Svg>
        </TaskItem>
        <TaskItem bar>
          <Svg w={24} h={24}>
            <path d="M0 2.500a1 1 0 0 1 1-1h7l2.500 3H0z" fill="#d99300" />
            <path d="M0 5.500h9l2-2h12a1 1 0 0 1 1 1V22a1 1 0 0 1-1 1H1a1 1 0 0 1-1-1z" fill="#ffcf48" />
            <path d="M4.500 18a2 2 0 0 1 2-2h11a2 2 0 0 1 2 2v5h-15z" fill="#1877c9" /><path d="M8.500 18.500h7" stroke="#0c4f94" />
          </Svg>
        </TaskItem>
        <TaskItem bar>
          <Svg w={24} h={24}>
            <path d="M13 1c6 0 10 4 9.500 8.500-.3 2-2 2.500-4 2.500v10c-5 2-8-1-7.500-4 .3-2-1-3-3-2.500C4 17 1 15.500 1 11.500 1 6 7 1 13 1z" fill="#3fb7ea" />
            <circle cx="5" cy="12" r="2" fill="#d8432b" /><circle cx="7.500" cy="7" r="2" fill="#2a9c47" /><circle cx="12.500" cy="4.500" r="2" fill="#f6b51c" /><circle cx="18" cy="6" r="2" fill="#f06a2a" />
            <path d="M16.500 8h4v5h-4z" fill="#f0d3a8" /><path d="M17 13h3v9.500a1.500 1.500 0 0 1-3 0z" fill="#b5651d" />
            <path d="M10.500 13h3M12 11.500v3" stroke="#134" />
          </Svg>
        </TaskItem>
        <TaskItem active><WordLogo size={24} /></TaskItem>
      </div>
      <div className="ml-[486px] flex pt-px">
        <Svg w={13} h={8} className="mt-[19px]"><path d="M1 7 6.500 1.500 12 7" stroke="#fff" strokeWidth="1.300" /></Svg>
        <div className="mt-[7px] ml-[16px] flex w-6 flex-col items-center text-[12px] leading-4">
          <Fit w={23}>ENG</Fit><Fit w={11}>IN</Fit>
        </div>
        <Svg w={66} h={16} className="mt-[14px] ml-[17px]">
          <path d="M1 6a11 11 0 0 1 14 0M3 8.500a8 8 0 0 1 10 0M5 11a4.800 4.800 0 0 1 6 0" stroke="#fff" strokeWidth="1.300" />
          <circle cx="8" cy="12.800" r="1.500" fill="#fff" />
          <path d="M24.500 6.500h2.500L31 3v10.500L27 10h-2.500z" stroke="#fff" strokeWidth="1.200" />
          <path d="M33 6c1 1.300 1 3 0 4.500M35.200 4c2 2.500 2 6 0 8.500" stroke="#fff" strokeWidth="1.200" /><path d="M37.500 2.500c2.500 3.500 2.500 8 0 11.500" stroke="#777" />
          <path d="M52 4.500h10v9H49.500V9.500" stroke="#fff" strokeWidth="1.300" /><path d="M51 6.300h9.500v5.500H51z" fill="#fff" /><path d="M64 7v4" stroke="#fff" strokeWidth="1.700" />
          <path d="M51.500.5 48 5.500h2.500L49 10.500l5-6h-2.500l1-4z" fill="#fff" stroke="#202020" strokeWidth=".5" />
        </Svg>
        <div className="mt-[6px] ml-[16px] flex w-[62px] flex-col items-end text-[12px] leading-4">
          <Fit w={27}>22:51</Fit><Fit w={62}>08-03-2023</Fit>
        </div>
      </div>
    </div>
  );
}

export default function App() {
  return (
    <div className="flex h-[1080px] w-[1920px] flex-col overflow-hidden bg-[#e4e4e4] bg-[radial-gradient(circle_at_880px_170px,rgba(238,226,229,0.7),transparent_220px),radial-gradient(circle_at_1180px_140px,rgba(232,232,218,0.9),transparent_330px),radial-gradient(circle_at_820px_520px,rgba(224,230,234,0.8),transparent_300px)] font-['Open_Sans','Noto_Sans',sans-serif] text-[#262626]">
      <TitleBar />
      <TabBar />
      <Ribbon />
      <div className="flex h-[832px] shrink-0">
        <div className="flex w-[1635px] shrink-0 flex-col">
          <HRuler />
          <div className="flex h-[808px]">
            <VRuler />
            <PageOne />
            <PageTwo />
            <div className="mt-[54px] ml-[12px] flex size-7 shrink-0 items-center justify-center border border-[#616161] bg-white">
              <Svg w={22} h={18}>
                <path d="M0 1h22M0 17h22M0 5h3M19 5h3M0 9h3M19 9h3M0 13h3M19 13h3" stroke="#2b88d8" />
                <path d="M5.500 13.500a5.500 5.500 0 0 1 11 0" stroke="#333" strokeWidth="3" />
              </Svg>
            </div>
            <div className="ml-auto flex w-[17px] flex-col items-center rounded-[8px] bg-[#f5f5f5]">
              <Svg w={9} h={8} className="mt-[5px]"><path d="M4.500 0 9 7.500H0z" fill="#707070" /></Svg>
              <div className="mt-[34px] h-[675px] w-[9px] rounded-full bg-[#707070]" />
              <Svg w={9} h={8} className="mt-[74px]"><path d="M4.500 7.500 9 0H0z" fill="#707070" /></Svg>
            </div>
          </div>
        </div>
        <FormatPane />
      </div>
      <StatusBar />
      <TaskBar />
    </div>
  );
}
